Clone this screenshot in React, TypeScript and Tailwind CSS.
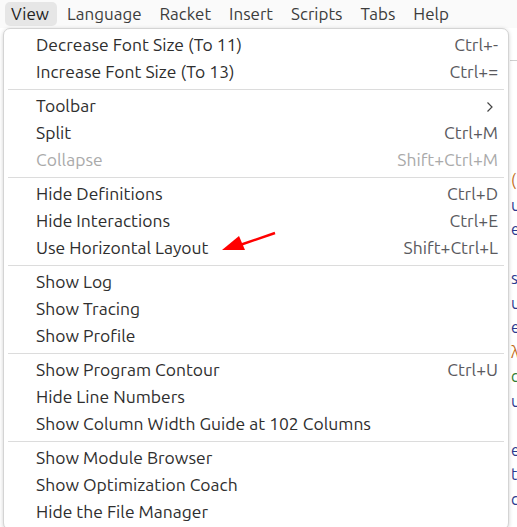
import React from "react";

type Item =
{
	label:     string;
	shortcut?: string;
	disabled?: boolean;
	submenu?:  boolean;
};

const groups: Item[][] =
[
	[
		{ label: "Decrease Font Size (To 11)", shortcut: "Ctrl+-" },
		{ label: "Increase Font Size (To 13)", shortcut: "Ctrl+=" },
	],
	[
		{ label: "Toolbar", submenu: true },
		{ label: "Split", shortcut: "Ctrl+M" },
		{ label: "Collapse", shortcut: "Shift+Ctrl+M", disabled: true },
	],
	[
		{ label: "Hide Definitions", shortcut: "Ctrl+D" },
		{ label: "Hide Interactions", shortcut: "Ctrl+E" },
		{ label: "Use Horizontal Layout", shortcut: "Shift+Ctrl+L" },
	],
	[
		{ label: "Show Log" },
		{ label: "Show Tracing" },
		{ label: "Show Profile" },
	],
	[
		{ label: "Show Program Contour", shortcut: "Ctrl+U" },
		{ label: "Hide Line Numbers" },
		{ label: "Show Column Width Guide at 102 Columns" },
	],
	[
		{ label: "Show Module Browser" },
		{ label: "Show Optimization Coach" },
		{ label: "Hide the File Manager" },
	],
];

const menus = ["Language", "Racket", "Insert", "Scripts", "Tabs", "Help"];

// bits of editor text peeking out on the right of the menu
const peek =
[
	{ ch: "(", c: "text-[#c26a1a]" },
	{ ch: "u", c: "text-[#2b3a8f]" },
	{ ch: "e", c: "text-[#2b3a8f]" },
	{ ch: "", c: "" },
	{ ch: "s", c: "text-[#2b3a8f]" },
	{ ch: "u", c: "text-[#2b3a8f]" },
	{ ch: "e", c: "text-[#2b3a8f]" },
	{ ch: "λ", c: "text-[#c26a1a]" },
	{ ch: "c", c: "text-[#2f7d32]" },
	{ ch: "u", c: "text-[#2b3a8f]" },
	{ ch: "", c: "" },
	{ ch: "e", c: "text-[#2b3a8f]" },
	{ ch: "t", c: "text-[#2b3a8f]" },
	{ ch: "c", c: "text-[#2b3a8f]" },
];

function Row({ item }: { item: Item })
{
	return (
		<div className={`h-[27px] flex items-center justify-between pl-[32px] pr-[10px] whitespace-nowrap ${item.disabled ? "text-[#aaaaaa]" : "text-[#2e2e2e]"}`}>
			<span>{item.label}</span>
			{item.shortcut && (
				<span className={item.disabled ? "text-[#aaaaaa]" : "text-[#5a5a5e]"}>{item.shortcut}</span>
			)}
			{item.submenu && (
				<svg width="8" height="12" viewBox="0 0 8 12" className="mr-[4px]">
					<path d="M1.5 1.5 L6 6 L1.5 10.5" fill="none" stroke="#444" strokeWidth="1.2" />
				</svg>
			)}
		</div>
	);
}

export default function App()
{
	return (
		<div className="relative w-[517px] h-[527px] overflow-hidden bg-white text-[17.5px]" style={{ fontFamily: "Ubuntu, 'Noto Sans', sans-serif" }}>

			{/* Menu bar */}
			<div className="h-[28px] flex items-center gap-[18px] bg-[#fafafa] text-[17px] text-[#3c3c3c]">
				<div className="ml-[5px] -mr-[8px] h-[24px] pl-[6px] pr-[8px] flex items-center rounded-[5px] bg-[#e6e6e6] text-[#222]">View</div>
				{menus.map((m) => (
					<div key={m}>{m}</div>
				))}
			</div>

			{/* Editor behind */}
			<div className="absolute left-[510px] top-[60px] w-[7px] border-t border-[#cfcfcf]" />
			<div className="absolute left-[511px] top-[168px] flex flex-col text-[16px] leading-[24.5px]">
				{peek.map((p, i) => (
					<span key={i} className={`h-[24.5px] ${p.c}`}>{p.ch}</span>
				))}
			</div>

			{/* Dropdown */}
			<div className="absolute left-[3px] top-[28px] w-[506px] h-[502px] bg-white rounded-[7px] border border-[#d4d4d4] shadow-[0_1px_4px_rgba(0,0,0,0.18)] pt-[3px]">
				{groups.map((g, gi) => (
					<div key={gi}>
						{gi > 0 && <div className="my-[3px] mx-[4px] border-t border-[#dcdcdc]" />}
						{g.map((it) => <Row key={it.label} item={it} />)}
					</div>
				))}
			</div>

			{/* Annotation arrow */}
			<svg className="absolute left-0 top-0" width="517" height="527">
				<line x1="275" y1="233" x2="240" y2="245" stroke="#ff0000" strokeWidth="2.5" />
				<polygon points="222,250 239,236 245,250" fill="#ff0000" />
			</svg>
		</div>
	);
}
